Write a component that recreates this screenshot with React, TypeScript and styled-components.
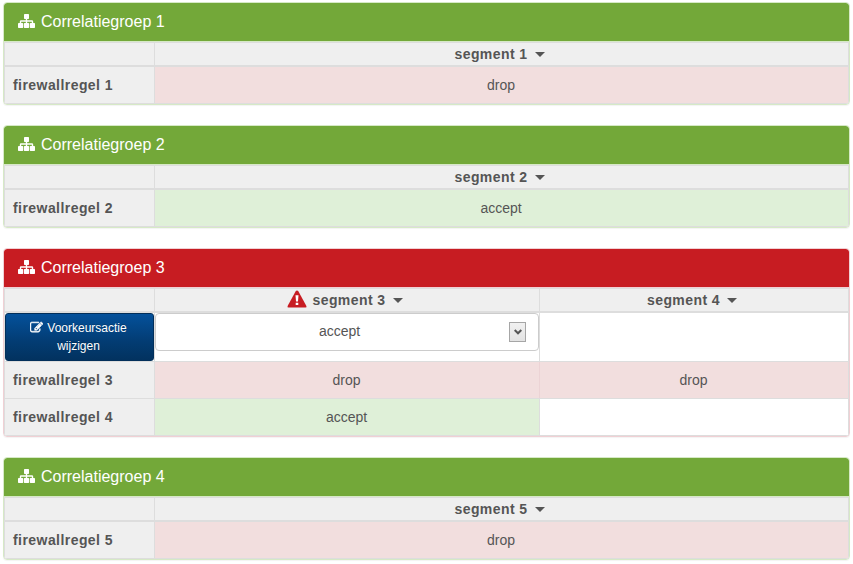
import React from "react";
import styled, { createGlobalStyle, css } from "styled-components";

const GlobalStyle = createGlobalStyle`
  * { box-sizing: border-box; }
  body {
    margin: 0;
    background: #fff;
    color: #555;
    font: 14px/20px "Liberation Sans", Arial, sans-serif;
  }
`;

type Tone = "green" | "red";
type Action = "drop" | "accept" | "";

const tones = {
  green: { fill: "#73a839", edge: "#d6e9c6" },
  red: { fill: "#c71c22", edge: "#f0d0d4" },
};

const Page = styled.main`
  display: flex;
  flex-direction: column;
  gap: 20px;
  padding: 2px 3px 4px;
`;

const Panel = styled.section<{ $tone: Tone }>`
  border: 1px solid ${(p) => tones[p.$tone].edge};
  border-radius: 4px;
  box-shadow: 0 1px 1px rgba(0, 0, 0, 0.05);
  overflow: hidden;
`;

const Heading = styled.h3<{ $tone: Tone }>`
  display: flex;
  align-items: center;
  gap: 6px;
  height: 38px;
  margin: 0;
  padding: 0 14px;
  background: ${(p) => tones[p.$tone].fill};
  border-radius: 3px 3px 0 0;
  color: #fff;
  font-size: 16px;
  font-weight: 400;
  white-space: nowrap;
`;

const Table = styled.div<{ $tone: Tone }>`
  border: 1px solid #ddd;
  box-shadow: 0 -1px 0 ${(p) => tones[p.$tone].edge};
  margin-top: 1px;
`;

const columns = {
  one: "150px minmax(0, 1fr)",
  two: "150px 385px minmax(0, 1fr)",
};

const rowHeights = { head: 22, edit: 48, rule: 36 };

const Row = styled.div<{ $wide: boolean; $kind: keyof typeof rowHeights }>`
  display: grid;
  box-sizing: content-box;
  grid-template-columns: ${(p) => (p.$wide ? columns.two : columns.one)};
  height: ${(p) => rowHeights[p.$kind]}px;
  border-bottom: ${(p) => (p.$kind === "head" ? 2 : 1)}px solid #ddd;
  &:last-child { border-bottom: 0; }
`;

const cellBase = css`
  display: flex;
  align-items: center;
  justify-content: center;
  min-width: 0;
  border-right: 1px solid #ddd;
  &:last-child { border-right: 0; }
`;

const HeadCell = styled.div`
  ${cellBase}
  gap: 7px;
  padding-right: 4px;
  background: #efefef;
  font-weight: 700;
  letter-spacing: 0.42px;
`;

const RuleName = styled.div`
  ${cellBase}
  justify-content: flex-start;
  padding-left: 8px;
  background: #efefef;
  font-weight: 700;
  letter-spacing: 0.44px;
`;

const ActionCell = styled.div<{ $action: Action }>`
  ${cellBase}
  padding-right: 1px;
  background: ${(p) =>
    p.$action === "drop" ? "#f2dede" : p.$action === "accept" ? "#dff0d8" : "#fff"};
  border-color: ${(p) => (p.$action === "drop" ? "#ecd3d5" : "#ddd")};
`;

const EditCell = styled.div`
  ${cellBase}
  align-items: flex-start;
  background: #fff;
`;

const EditButton = styled.button`
  width: 149px;
  height: 48px;
  padding: 0 2px 0 0;
  border: 1px solid #022f5a;
  border-radius: 3px;
  background: linear-gradient(#04519b, #033c73 60%, #02325f);
  color: #fff;
  font: 12px/18px "Liberation Sans", Arial, sans-serif;
  text-shadow: 0 -1px 0 rgba(0, 0, 0, 0.2);
  svg { vertical-align: -2px; margin-right: 4px; }
`;

const Select = styled.div`
  display: flex;
  align-items: center;
  justify-content: center;
  width: 100%;
  height: 38px;
  padding: 0 12px;
  border: 1px solid #ccc;
  border-radius: 4px;
  background: #fff;
`;

const SelectValue = styled.span`
  flex: 1;
  padding: 0 0 2px 2px;
  text-align: center;
`;

const SelectArrow = styled.span`
  display: flex;
  align-items: center;
  justify-content: center;
  width: 17px;
  height: 20px;
  border: 1px solid #a6a6a6;
  background: linear-gradient(#f1f1f1, #e3e3e3);
`;

const Caret = styled.span`
  border: 5px solid transparent;
  border-top-color: #555;
  border-bottom: 0;
`;

const SitemapIcon = styled(({ className }: { className?: string }) => (
  <svg className={className} width="17" height="14" viewBox="0 0 17 14" fill="currentColor">
    <rect x="6" y="0" width="5" height="5" rx=".7" />
    <rect x="0" y="9" width="5.2" height="5" rx=".7" />
    <rect x="5.9" y="9" width="5.2" height="5" rx=".7" />
    <rect x="11.8" y="9" width="5.2" height="5" rx=".7" />
    <path d="M2.5 9.5V7.6Q2.5 7 3.1 7H13.9Q14.5 7 14.5 7.6V9.5M8.5 4.5V9.5" fill="none" stroke="currentColor" strokeWidth="1.4" />
  </svg>
))`
  flex: none;
  margin-bottom: 2px;
`;

const EditIcon = () => (
  <svg width="13" height="13" viewBox="0 0 1792 1792" fill="currentColor" stroke="currentColor" strokeWidth="70">
    <path d="M888 1184l116-116-152-152-116 116v56h96v96h56zm440-720q-16-16-33 1l-350 350q-17 17-1 33t33-1l350-350q17-17 1-33zm80 594v190q0 119-84.5 203.5t-203.5 84.5h-832q-119 0-203.5-84.5t-84.5-203.5v-832q0-119 84.5-203.5t203.5-84.5h832q63 0 117 25 15 7 18 23 3 17-9 29l-49 49q-14 14-32 8-23-6-45-6h-832q-66 0-113 47t-47 113v832q0 66 47 113t113 47h832q66 0 113-47t47-113v-126q0-13 9-22l64-64q15-15 35-7t20 29zm-96-738l288 288-672 672h-288v-288zm444 132l-92 92-288-288 92-92q28-28 68-28t68 28l152 152q28 28 28 68t-28 68z" />
  </svg>
);

const WarningIcon = styled(({ className }: { className?: string }) => (
  <svg className={className} width="20" height="18" viewBox="0 0 20 18">
    <path d="M10 .4Q10.8.4 11.2 1.1L19.4 16Q20 17.6 18.5 17.6H1.5Q0 17.6.6 16L8.8 1.1Q9.2.4 10 .4Z" fill="#c71c22" />
    <path d="M8.5 5.3h3L11 11.5H9ZM8.7 12.7h2.6v2.4H8.7Z" fill="#fff" />
  </svg>
))`
  flex: none;
  margin: -2px -2px 0 0;
`;

const ChevronIcon = () => (
  <svg width="8" height="6" viewBox="0 0 8 6">
    <path d="M.7 1 4 4.3 7.3 1" fill="none" stroke="#555" strokeWidth="2" />
  </svg>
);

interface Group {
  title: string;
  tone: Tone;
  segments: { name: string; warning?: boolean }[];
  editable?: boolean;
  rules: { name: string; actions: Action[] }[];
}

const groups: Group[] = [
  { title: "Correlatiegroep 1", tone: "green", segments: [{ name: "segment 1" }], rules: [{ name: "firewallregel 1", actions: ["drop"] }] },
  { title: "Correlatiegroep 2", tone: "green", segments: [{ name: "segment 2" }], rules: [{ name: "firewallregel 2", actions: ["accept"] }] },
  {
    title: "Correlatiegroep 3",
    tone: "red",
    segments: [{ name: "segment 3", warning: true }, { name: "segment 4" }],
    editable: true,
    rules: [
      { name: "firewallregel 3", actions: ["drop", "drop"] },
      { name: "firewallregel 4", actions: ["accept", ""] },
    ],
  },
  { title: "Correlatiegroep 4", tone: "green", segments: [{ name: "segment 5" }], rules: [{ name: "firewallregel 5", actions: ["drop"] }] },
];

function GroupPanel({ group }: { group: Group }) {
  const wide = group.segments.length > 1;
  return (
    <Panel $tone={group.tone}>
      <Heading $tone={group.tone}>
        <SitemapIcon />
        {group.title}
      </Heading>
      <Table $tone={group.tone}>
        <Row $wide={wide} $kind="head">
          <HeadCell />
          {group.segments.map((s) => (
            <HeadCell key={s.name}>
              {s.warning && <WarningIcon />}
              {s.name}
              <Caret />
            </HeadCell>
          ))}
        </Row>
        {group.editable && (
          <Row $wide={wide} $kind="edit">
            <EditCell>
              <EditButton>
                <EditIcon />
                Voorkeursactie
                <br />
                wijzigen
              </EditButton>
            </EditCell>
            <EditCell>
              <Select>
                <SelectValue>accept</SelectValue>
                <SelectArrow>
                  <ChevronIcon />
                </SelectArrow>
              </Select>
            </EditCell>
            <EditCell />
          </Row>
        )}
        {group.rules.map((r) => (
          <Row key={r.name} $wide={wide} $kind="rule">
            <RuleName>{r.name}</RuleName>
            {r.actions.map((a, i) => (
              <ActionCell key={i} $action={a}>
                {a}
              </ActionCell>
            ))}
          </Row>
        ))}
      </Table>
    </Panel>
  );
}

export default function App() {
  return (
    <>
      <GlobalStyle />
      <Page>
        {groups.map((g) => (
          <GroupPanel key={g.title} group={g} />
        ))}
      </Page>
    </>
  );
}
